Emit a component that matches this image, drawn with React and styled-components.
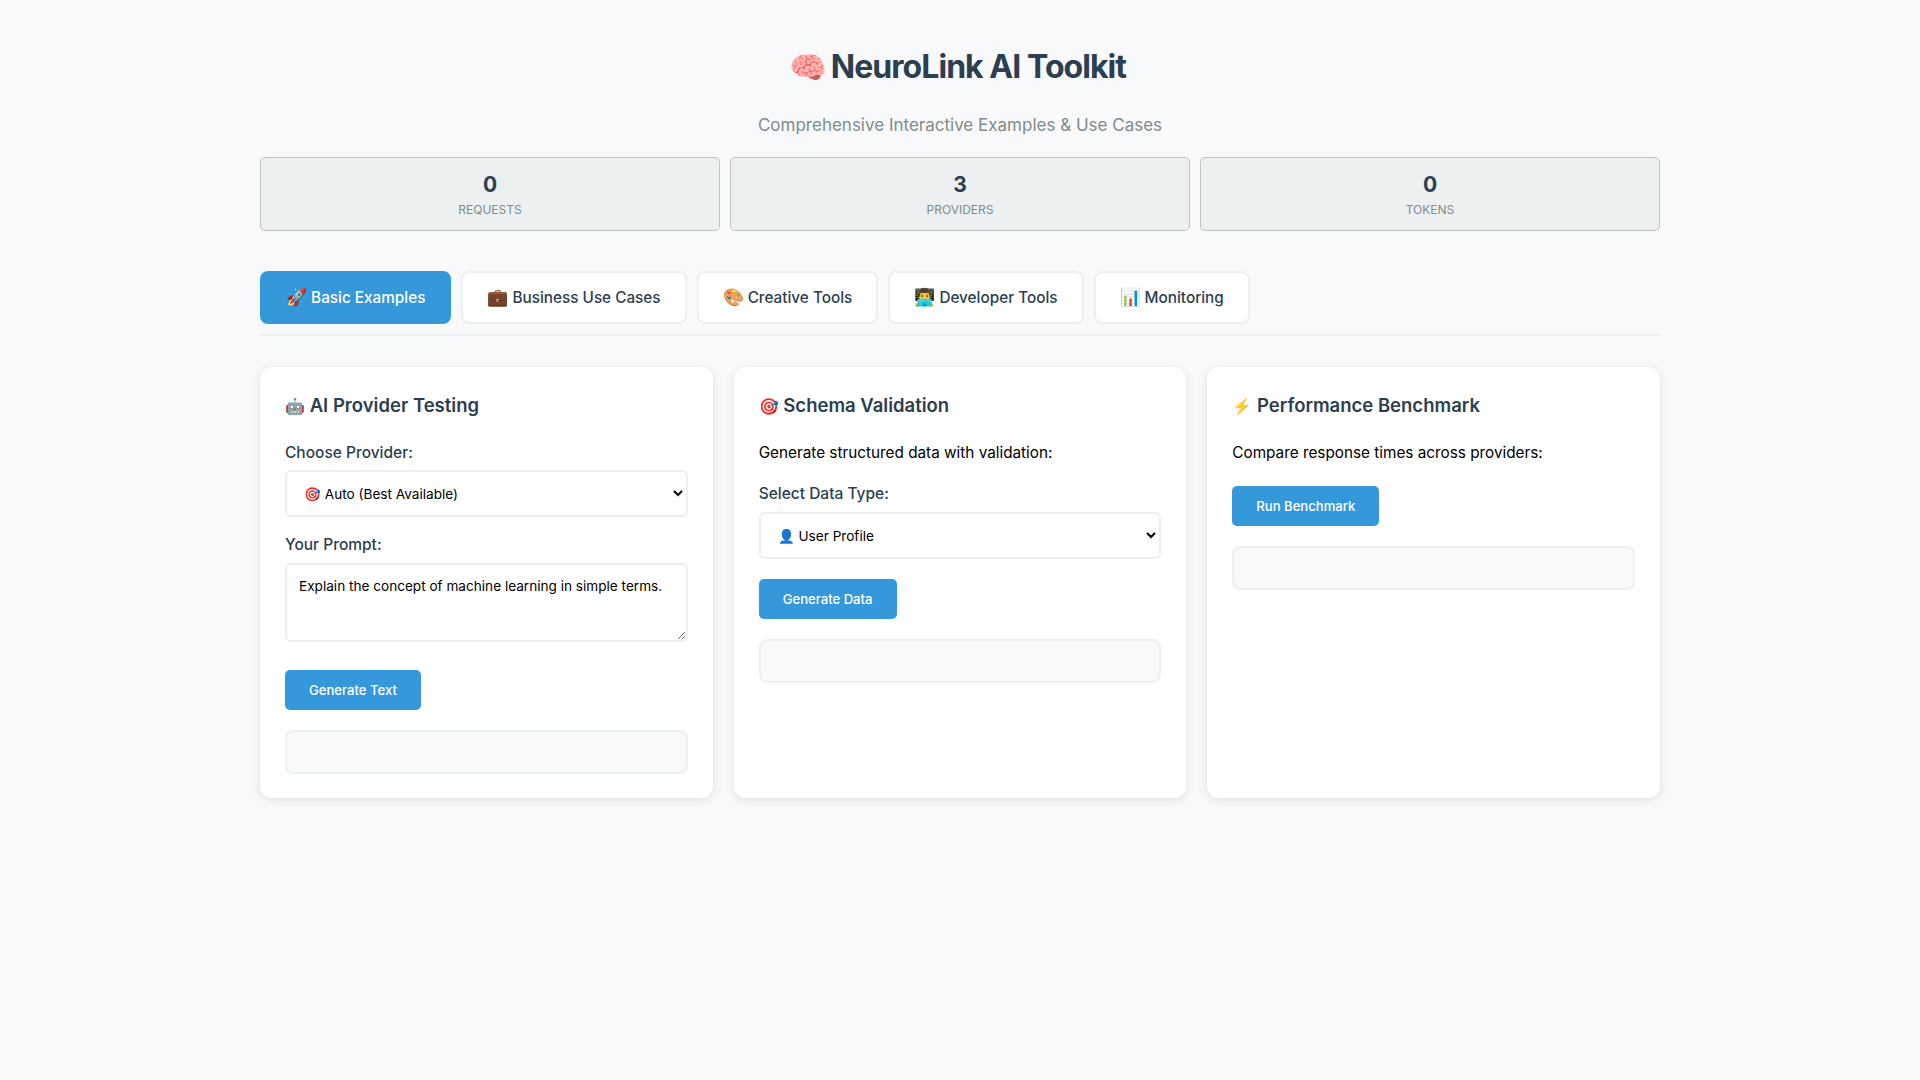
import React from 'react'
import styled, { createGlobalStyle } from 'styled-components'

const GlobalStyle = createGlobalStyle`
  * { box-sizing: border-box; }
  body {
    margin: 0;
    background: #f8f9fa;
    font-family: Inter, "Noto Sans", sans-serif;
    color: #000;
  }
`

const Page = styled.div`
  width: 1400px;
  min-height: 1080px;
  margin: 0 auto;
  padding-top: 46px;
`

const Header = styled.header`
  text-align: center;
`

const Emoji = styled.span`
  font-size: ${p => p.$size}px;
  line-height: 1;
  letter-spacing: 0;
`

const TitleEmoji = styled(Emoji)`
  margin-right: -2.4px;
`

const Title = styled.h1`
  margin: 0;
  padding-right: 5.4px;
  font-size: 32px;
  line-height: 42px;
  font-weight: 700;
  letter-spacing: -0.95px;
  color: #2c3e50;
`

const Subtitle = styled.p`
  margin: 25px 0 0;
  font-size: 17px;
  line-height: 24px;
  color: #7f8c8d;
`

const Stats = styled.div`
  display: grid;
  grid-template-columns: repeat(3, 1fr);
  gap: 10px;
  margin-top: 20px;
`

const Stat = styled.div`
  height: 74px;
  padding-top: 14px;
  text-align: center;
  background: #ecf0f1;
  border: 1px solid #bdc3c7;
  border-radius: 5px;
`

const StatValue = styled.div`
  font-size: 21px;
  line-height: 25px;
  font-weight: 700;
  color: #2c3e50;
`

const StatLabel = styled.div`
  margin-top: 5px;
  font-size: 12px;
  line-height: 15px;
  text-transform: uppercase;
  color: #7f8c8d;
`

const Tabs = styled.nav`
  display: flex;
  gap: 10px;
  margin-top: 40px;
  padding-bottom: 10px;
  border-bottom: 2px solid #ecf0f1;
`

const Tab = styled.button`
  height: 53px;
  padding: 0 24px;
  font-family: inherit;
  font-size: 15.3px;
  line-height: 20px;
  font-weight: 500;
  color: ${p => (p.$active ? '#fff' : '#2c3e50')};
  background: ${p => (p.$active ? '#3498db' : '#fff')};
  border: 2px solid ${p => (p.$active ? '#3498db' : '#ecf0f1')};
  border-radius: 8px;
`

const Cards = styled.div`
  display: grid;
  grid-template-columns: repeat(3, 1fr);
  gap: 21px;
  margin-top: 31px;
`

const Card = styled.section`
  height: 431px;
  padding: 25px;
  background: #fff;
  border-radius: 12px;
  box-shadow: 0 2px 10px rgba(0, 0, 0, 0.1);
`

const CardTitle = styled.h3`
  margin: 0;
  font-size: 18.5px;
  line-height: 26px;
  font-weight: 600;
  color: #2c3e50;
`

const Text = styled.p`
  margin: 24px 0 0;
  font-size: 15.3px;
  line-height: 22px;
`

const Label = styled.label`
  display: block;
  margin-top: ${p => p.$top}px;
  font-size: 15.5px;
  line-height: 22px;
  font-weight: 500;
  color: #2c3e50;
`

const Select = styled.select`
  display: block;
  width: 100%;
  height: 47px;
  margin-top: ${p => p.$top}px;
  padding: 0 13px;
  font-family: inherit;
  font-size: 13.6px;
  background: #fff;
  border: 2px solid #ecf0f1;
  border-radius: 6px;
`

const Prompt = styled.textarea`
  display: block;
  width: 100%;
  height: 79px;
  margin-top: 7px;
  padding: 11px 12px 12px;
  font-family: inherit;
  font-size: 13.6px;
  line-height: 20px;
  border: 2px solid #ecf0f1;
  border-radius: 6px;
`

const Action = styled.button`
  display: block;
  height: 40px;
  margin-top: ${p => p.$top}px;
  padding: 0 24px;
  font-family: inherit;
  font-size: 13.1px;
  font-weight: 500;
  color: #fff;
  background: #3498db;
  border: 0;
  border-radius: 5px;
`

const Result = styled.div`
  height: 44px;
  margin-top: 20px;
  background: #f8f9fa;
  border: 2px solid #ecf0f1;
  border-radius: 8px;
`

const tabs = [
  ['🚀', 'Basic Examples'],
  ['💼', 'Business Use Cases'],
  ['🎨', 'Creative Tools'],
  ['👨‍💻', 'Developer Tools'],
  ['📊', 'Monitoring'],
]

const stats = [
  ['0', 'Requests'],
  ['3', 'Providers'],
  ['0', 'Tokens'],
]

export default function App() {
  return (
    <Page>
      <GlobalStyle />
      <Header>
        <Title><TitleEmoji $size={30.4}>🧠</TitleEmoji> NeuroLink AI Toolkit</Title>
        <Subtitle>Comprehensive Interactive Examples &amp; Use Cases</Subtitle>
      </Header>
      <Stats>
        {stats.map(([value, label]) => (
          <Stat key={label}>
            <StatValue>{value}</StatValue>
            <StatLabel>{label}</StatLabel>
          </Stat>
        ))}
      </Stats>
      <Tabs>
        {tabs.map(([icon, text], i) => (
          <Tab key={text} $active={i === 0}><Emoji $size={17}>{icon}</Emoji> {text}</Tab>
        ))}
      </Tabs>
      <Cards>
        <Card>
          <CardTitle><Emoji $size={16}>🤖</Emoji> AI Provider Testing</CardTitle>
          <Label $top={24}>Choose Provider:</Label>
          <Select $top={6} defaultValue="auto">
            <option value="auto">🎯 Auto (Best Available)</option>
          </Select>
          <Label $top={17}>Your Prompt:</Label>
          <Prompt defaultValue="Explain the concept of machine learning in simple terms." />
          <Action $top={28}>Generate Text</Action>
          <Result />
        </Card>
        <Card>
          <CardTitle><Emoji $size={16}>🎯</Emoji> Schema Validation</CardTitle>
          <Text>Generate structured data with validation:</Text>
          <Label $top={19}>Select Data Type:</Label>
          <Select $top={7} defaultValue="user">
            <option value="user">👤 User Profile</option>
          </Select>
          <Action $top={20}>Generate Data</Action>
          <Result />
        </Card>
        <Card>
          <CardTitle><Emoji $size={16}>⚡</Emoji> Performance Benchmark</CardTitle>
          <Text>Compare response times across providers:</Text>
          <Action $top={22}>Run Benchmark</Action>
          <Result />
        </Card>
      </Cards>
    </Page>
  )
}
